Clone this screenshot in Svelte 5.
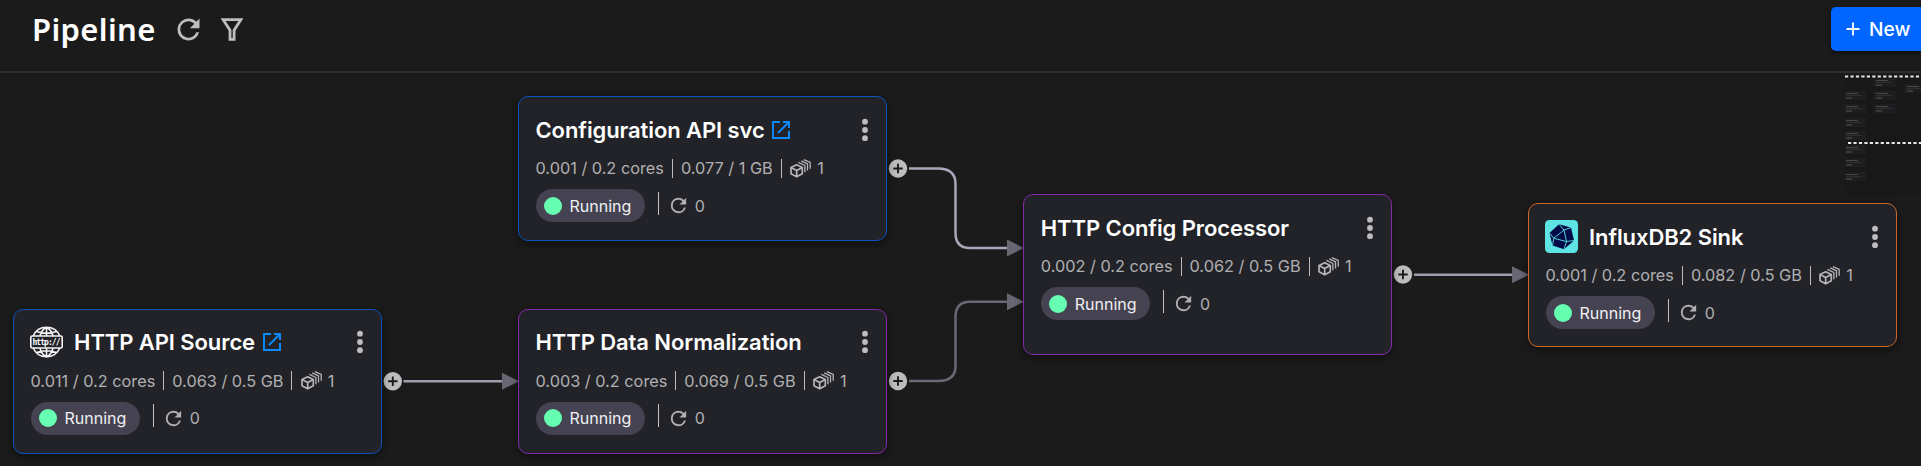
<script>
  const nodes = [
    { id: 'config-api', x: 518, y: 96, h: 145, kind: 'source', title: 'Configuration API svc', link: true, cpu: '0.001 / 0.2 cores', mem: '0.077 / 1 GB' },
    { id: 'http-source', x: 13, y: 308.5, h: 145, kind: 'source', icon: 'http', title: 'HTTP API Source', link: true, cpu: '0.011 / 0.2 cores', mem: '0.063 / 0.5 GB' },
    { id: 'normalize', x: 518, y: 308.5, h: 145, kind: 'transform', title: 'HTTP Data Normalization', cpu: '0.003 / 0.2 cores', mem: '0.069 / 0.5 GB' },
    { id: 'processor', x: 1023.3, y: 194.3, h: 160.5, kind: 'transform', title: 'HTTP Config Processor', cpu: '0.002 / 0.2 cores', mem: '0.062 / 0.5 GB' },
    { id: 'influx', x: 1528, y: 203, h: 144, kind: 'sink', icon: 'influx', title: 'InfluxDB2 Sink', cpu: '0.001 / 0.2 cores', mem: '0.082 / 0.5 GB' }
  ];
  const edges = [
    { d: 'M909 168.5H938Q955.5 168.5 955.5 184V233Q955.5 248 970 248H1008', c: '#aaa6b8', ax: 1007, ay: 248 },
    { d: 'M909 381H938Q955.5 381 955.5 366V317Q955.5 301.7 970 301.7H1008', c: '#6b6975', ax: 1007, ay: 301.7 },
    { d: 'M403.5 381.3H503', c: '#a09dac', ax: 502, ay: 381.3 },
    { d: 'M1414 274.8H1513', c: '#a09dac', ax: 1512, ay: 274.8 }
  ];
  const ports = [[898, 168.5], [392.8, 381.2], [898, 381], [1403, 274.5]];
  const mini = [[30, 3], [30, 16], [30, 29], [0, 16], [0, 29], [0, 43], [0, 56], [0, 70], [0, 83], [0, 97], [61, 9]];
</script>

{#snippet refresh(size)}
  <svg class="ico" width={size} height={size} viewBox="0 0 24 24"><path fill="currentColor" d="M17.65 6.35A7.96 7.96 0 0 0 12 4a8 8 0 1 0 7.73 10h-2.08A6 6 0 1 1 12 6c1.66 0 3.14.69 4.22 1.78L13 11h7V4z" /></svg>
{/snippet}

<div class="page">
  <header>
    <h1>Pipeline</h1>
    <span class="tool">{@render refresh(33)}</span>
    <svg class="filter" width="22" height="23" viewBox="0 0 22 23"><path d="M2 1.6H20L13.1 12.2V21.3H9V12.2Z" fill="none" stroke="currentColor" stroke-width="2.8" /></svg>
    <button class="new"><svg width="14" height="14" viewBox="0 0 14 14"><path d="M7 .5V13.5M.5 7H13.5" stroke="#fff" stroke-width="1.8" /></svg><span>New</span></button>
  </header>

  <main>
    <svg class="edges" width="1921" height="466" viewBox="0 0 1921 466">
      {#each edges as e}
        <path d={e.d} fill="none" stroke={e.c} stroke-width="2.5" />
        <path d="M{e.ax} {e.ay - 8.5}L{e.ax + 17} {e.ay}L{e.ax} {e.ay + 8.5}Z" fill="#696774" />
      {/each}
      {#each ports as [x, y]}
        <circle cx={x} cy={y} r="9.2" fill="#bdbdbd" />
        <path d="M{x - 4.7} {y}H{x + 4.7}M{x} {y - 4.7}V{y + 4.7}" stroke="#1b1b1b" stroke-width="1.9" />
      {/each}
    </svg>

    <div class="minimap">
      {#each mini as [x, y]}
        <div class="mini" style="left:{x}px;top:{y}px"><i></i><i></i><b></b></div>
      {/each}
      <svg width="76" height="120" viewBox="0 0 76 120"><path d="M0 1.5H76M3 68H76" stroke="#e8e8e8" stroke-width="2.2" stroke-dasharray="3.2 2.25" /></svg>
    </div>

    {#each nodes as n (n.id)}
      <article class="node {n.kind}" style="left:{n.x}px;top:{n.y}px;height:{n.h}px">
        <div class="head">
          {#if n.icon === 'http'}
            <svg class="logo" width="33" height="33" viewBox="0 0 33 33" fill="none" stroke="#f5f5f5" stroke-width="1.6">
              <path d="M3.2 10A14.5 14.5 0 0 1 29.8 10M3.2 22A14.5 14.5 0 0 0 29.8 22M16.5 1.5V10M16.5 22V31M10 10Q11.5 3.5 16.5 1.5Q21.5 3.5 23 10M10 22Q11.5 28.5 16.5 31Q21.5 28.5 23 22M6.5 5.5Q16.5 9 26.5 5.5M6.5 26.5Q16.5 23 26.5 26.5" />
              <rect x=".8" y="10" width="31.4" height="12" rx="1.5" />
              <text x="16.5" y="18.7" text-anchor="middle" textLength="28" fill="#fff" stroke="none">http://</text>
            </svg>
          {:else if n.icon === 'influx'}
            <svg class="logo" width="33" height="33" viewBox="0 0 33 33">
              <rect width="33" height="33" rx="4.5" fill="#5ee4e4" />
              <path d="M14 4.3L26 7.5L29 20.5L19 29.3L7.5 25.5L4.5 13Z" fill="#020a47" />
              <path d="M14 4.3L19 10L26 7.5M19 10L8.8 18.3L4.5 13M19 10L21.5 21.5L8.8 18.3L7.5 25.5M21.5 21.5L29 20.5M21.5 21.5L19 29.3" fill="none" stroke="#5ee4e4" stroke-width=".9" />
            </svg>
          {/if}
          <h2>{n.title}</h2>
          {#if n.link}
            <svg class="link" width="18" height="18" viewBox="0 0 18 18" fill="none" stroke="#0d8bff" stroke-width="1.9"><path d="M8 1H1V17H17V10M11 1H17V7M17 1L6 12" /></svg>
          {/if}
          <svg class="more" width="6" height="24" viewBox="0 0 6 24" fill="#bdbdbd"><circle cx="3" cy="3.7" r="2.9" /><circle cx="3" cy="12" r="2.9" /><circle cx="3" cy="20.2" r="2.9" /></svg>
        </div>
        <div class="meta">
          <span>{n.cpu}</span><i class="bar"></i><span>{n.mem}</span><i class="bar"></i>
          <svg class="cube" width="21" height="19" viewBox="0 0 21 19" fill="none" stroke="currentColor" stroke-linejoin="round">
            <path d="M6.7 5.8L12.3 8.6V14.8L6.7 17.8L1 14.8V8.6ZM1 8.6L6.7 11.6L12.3 8.6M6.7 11.6V17.8" stroke-width="1.7" />
            <path d="M8.4 3.4L14.9 6.5V13.2M11.2 1.9L17.5 4.8V11.5M13.8 .7L20.2 3.4V9.8" stroke-width="1.3" />
          </svg>
          <span>1</span>
        </div>
        <div class="status">
          <span class="pill"><i></i>Running</span><i class="bar"></i>{@render refresh(23)}<span>0</span>
        </div>
      </article>
    {/each}
  </main>
</div>

<style>
  :global(body) { background: #1b1b1b; overflow: hidden; }
  .page { position: relative; width: 1921px; height: 466px; overflow: hidden; background: #1b1b1b; color: #fff; font-family: Inter, sans-serif; }
  header { box-sizing: border-box; height: 73px; border-bottom: 2px solid #2d2d2d; padding: 0 0 13px 32px; display: flex; align-items: center; }
  h1 { margin: 0; width: 124px; white-space: nowrap; font: 600 31px/40px "Noto Sans", sans-serif; letter-spacing: .35px; }
  .tool { display: flex; margin-left: 16px; color: #bdbdbd; }
  .filter { color: #bdbdbd; margin-left: 16px; }
  .new { margin-left: auto; flex: none; box-sizing: border-box; width: 90px; height: 44px; padding: 0 0 0 15px; border: 0; border-radius: 5px 0 0 5px; background: #0066ff; color: #fff; display: flex; align-items: center; gap: 9px; font: 500 19.2px Inter, sans-serif; box-shadow: 0 2px 4px #0008; }
  .edges { position: absolute; left: 0; top: 0; }
  .minimap { position: absolute; left: 1845px; top: 75px; width: 76px; height: 120px; background: #181818; overflow: hidden; }
  .minimap svg { position: absolute; left: 0; top: 0; }
  .mini { position: absolute; box-sizing: border-box; width: 23px; height: 9px; margin-left: -2px; padding: 1.5px 3px; background: #1e1e21; display: flex; flex-direction: column; gap: 1px; }
  .mini i { width: 12px; height: 1px; background: #484848; }
  .mini i + i { width: 16px; background: #303032; }
  .mini b { width: 6px; height: 2px; background: #343b39; }
  .node { position: absolute; box-sizing: border-box; width: 369px; padding: 15.5px 17px 0 16.5px; border: 1px solid; border-radius: 10px; background: #222328; box-shadow: 0 3px 8px #0007; }
  .source { border-color: #0b53bd; }
  .transform { border-color: #8429a8; }
  .sink { border-color: #d0672a; }
  .head { height: 34px; display: flex; align-items: center; }
  .logo { margin: 0 11px 0 -.4px; }
  .logo text { font: 700 8px "DejaVu Sans Mono", monospace; }
  h2 { margin: 0; font-size: 22px; font-weight: 600; line-height: 30px; letter-spacing: -.09px; white-space: nowrap; }
  .link { margin-left: 7.5px; }
  .more { margin-left: auto; margin-right: 1.4px; }
  .meta { height: 22px; margin-top: 10.5px; display: flex; align-items: center; color: #b0b0b2; font-size: 16.3px; white-space: nowrap; }
  .bar { width: 1px; height: 19px; margin: 0 8px; background: #bcbcbe; }
  .cube { margin-left: .4px; margin-right: 6px; color: #b5b5b7; }
  .status { margin-top: 10px; height: 33px; display: flex; align-items: center; color: #b0b0b2; font-size: 16px; }
  .pill { box-sizing: border-box; width: 109px; height: 33px; padding-left: 8px; border-radius: 17px; background: #454351; color: #f0f0f2; display: flex; align-items: center; gap: 8px; }
  .pill i { width: 18px; height: 18px; border-radius: 50%; background: #66ffb2; }
  .status .bar { height: 23px; margin: -5px 8px 0 13.3px; background: #c4c4c6; }
  .status .ico { margin-right: 5px; }
</style>
